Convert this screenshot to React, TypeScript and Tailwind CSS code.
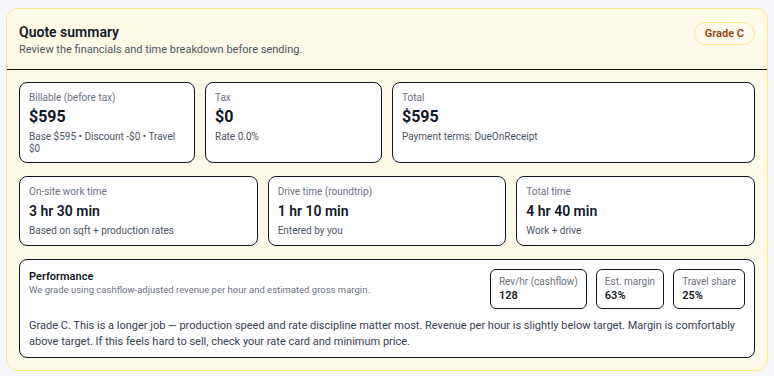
type Stat = { label: string; value: string; note: string };

const moneyStats: Stat[] = [
  { label: "Billable (before tax)", value: "$595", note: "Base $595 • Discount -$0 • Travel $0" },
  { label: "Tax", value: "$0", note: "Rate 0.0%" },
  { label: "Total", value: "$595", note: "Payment terms: DueOnReceipt" },
];

const timeStats: Stat[] = [
  { label: "On-site work time", value: "3 hr 30 min", note: "Based on sqft + production rates" },
  { label: "Drive time (roundtrip)", value: "1 hr 10 min", note: "Entered by you" },
  { label: "Total time", value: "4 hr 40 min", note: "Work + drive" },
];

const metrics = [
  { label: "Rev/hr (cashflow)", value: "128" },
  { label: "Est. margin", value: "63%" },
  { label: "Travel share", value: "25%" },
];

function StatCard({ stat, big }: { stat: Stat; big?: boolean }) {
  return (
    <div className="rounded-lg border border-[#111827] bg-white px-[9px] pt-2 pb-2">
      <div className="text-[10px] leading-[14px] text-[#6b7280]">{stat.label}</div>
      {big ? (
        <div className="text-[16px] font-bold leading-[24px] text-[#111827]">{stat.value}</div>
      ) : (
        <div className="text-[14px] font-semibold leading-[24px] text-[#111827]">{stat.value}</div>
      )}
      <div className="mt-[2px] text-[10px] leading-[11.5px] text-[#4b5563]">{stat.note}</div>
    </div>
  );
}

export default function App() {
  return (
    <div
      className="min-h-[376px] bg-[#f5f7fb] px-[6px] pt-2 pb-1"
      style={{ fontFamily: "Roboto, 'Noto Sans', sans-serif" }}
    >
      <div className="overflow-hidden rounded-xl border border-[#fde68a] bg-[#fefae8]">
        <div className="flex items-start justify-between border-b border-[#111] px-3 pt-3 pb-3">
          <div>
            <h1 className="text-[14px] font-semibold leading-[22px] text-[#111827]">Quote summary</h1>
            <p className="text-[11px] leading-[14px] text-[#4b5563]">
              Review the financials and time breakdown before sending.
            </p>
          </div>
          <span className="mt-[1px] rounded-full border border-[#fde68a] bg-[#fffbeb] px-[10px] py-[3px] text-[11px] font-semibold leading-[15px] text-[#92400e]">
            Grade C
          </span>
        </div>

        <div className="flex flex-col gap-[13px] p-3">
          <div className="grid grid-cols-[176fr_177fr_363fr] gap-2.5">
            {moneyStats.map((s, i) => (
              <StatCard key={i} stat={s} big />
            ))}
          </div>

          <div className="grid grid-cols-3 gap-2.5">
            {timeStats.map((s, i) => (
              <StatCard key={i} stat={s} />
            ))}
          </div>

          <div className="rounded-lg border border-[#111827] bg-white px-[9px] pt-[9px] pb-[7px]">
            <div className="flex items-start justify-between">
              <div>
                <div className="text-[11px] font-semibold leading-[15px] text-[#111827]">Performance</div>
                <div className="text-[9.5px] leading-[12px] text-[#6b7280]">
                  We grade using cashflow-adjusted revenue per hour and estimated gross margin.
                </div>
              </div>
              <div className="flex gap-[9px]">
                {metrics.map((m, i) => (
                  <div key={i} className="rounded-md border border-[#111827] px-[8px] py-[5px]">
                    <div className="text-[10px] leading-[13px] text-[#6b7280]">{m.label}</div>
                    <div className="text-[11px] font-semibold leading-[15px] text-[#111827]">{m.value}</div>
                  </div>
                ))}
              </div>
            </div>
            <p className="mt-[9px] text-[11px] leading-[16px] text-[#374151]">
              Grade C. This is a longer job — production speed and rate discipline matter most. Revenue per hour is
              slightly below target. Margin is comfortably above target. If this feels hard to sell, check your rate
              card and minimum price.
            </p>
          </div>
        </div>
      </div>
    </div>
  );
}
